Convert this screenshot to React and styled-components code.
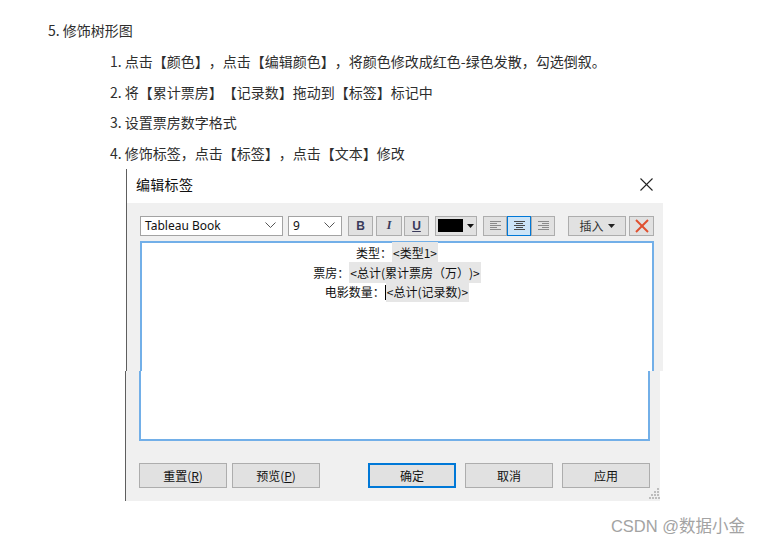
import React from 'react';
import styled, { createGlobalStyle } from 'styled-components';

const Global = createGlobalStyle`
  html, body { margin: 0; padding: 0; background: #fff; }
  body { font-family: "Noto Sans CJK SC", "Noto Sans", sans-serif; }
`;

const Page = styled.div`
  width: 761px;
  height: 544px;
  overflow: hidden;
  box-sizing: border-box;
  padding-top: 15px;
  color: #2e2e2e;
  text-spacing-trim: space-all;
`;

const Heading = styled.div`
  font-size: 14px;
  line-height: 31px;
  padding-left: 48px;
`;

const Steps = styled.ol`
  margin: 0;
  padding: 0 0 0 110px;
  list-style: none;
`;

const Step = styled.li`
  font-size: 14px;
  line-height: 30.7px;
`;

/* ---------- dialog screenshot ---------- */
const ShotTop = styled.div`
  margin-left: 126px;
  width: 537px;
  box-sizing: border-box;
  border-left: 1px solid #5e5e5e;
  font-size: 12px;
  color: #000;
`;

const TitleBar = styled.div`
  height: 34px;
  box-sizing: border-box;
  background: #fff;
  display: flex;
  align-items: center;
  justify-content: space-between;
  padding: 0 10px 3px 9px;
`;

const Title = styled.span`
  font-size: 14px;
  color: #111;
  letter-spacing: 0.3px;
`;

const Body = styled.div`
  background: #f0f0f0;
  padding: 13px 9px 0 13px;
`;

const Toolbar = styled.div`
  display: flex;
  align-items: center;
  height: 20px;
`;

const Select = styled.div`
  width: ${p => p.$w}px;
  height: 20px;
  box-sizing: border-box;
  background: #fff;
  border: 1px solid #a3a3a3;
  display: flex;
  align-items: center;
  justify-content: space-between;
  padding: 0 6px 0 4px;
  margin-right: ${p => p.$mr || 0}px;
  font-family: "Noto Sans", "Noto Sans CJK SC", sans-serif;
  font-size: 12px;
  color: #111;
`;

const ToolBtn = styled.div`
  width: ${p => p.$w || 25}px;
  height: 20px;
  box-sizing: border-box;
  background: ${p => (p.$active ? '#cce4f7' : '#e1e1e1')};
  border: 1px solid ${p => (p.$active ? '#0078d7' : '#adadad')};
  display: flex;
  align-items: center;
  justify-content: center;
  gap: 4px;
  margin-right: ${p => p.$mr || 0}px;
  font-size: 12px;
  color: #333;
`;

const Glyph = styled.span`
  font-family: ${p => (p.$serif ? '"Liberation Serif", serif' : '"Liberation Sans", sans-serif')};
  font-weight: ${p => (p.$bold ? 700 : 400)};
  font-style: ${p => (p.$italic ? 'italic' : 'normal')};
  text-decoration: ${p => (p.$under ? 'underline' : 'none')};
  font-size: 12px;
  color: #3a3a5a;
`;

const Swatch = styled.div`
  width: 25px;
  height: 13px;
  background: #000;
`;

const Group = styled.div`
  display: flex;
  margin-right: ${p => p.$mr || 0}px;
`;

const TextAreaTop = styled.div`
  margin-top: 5px;
  height: 130px;
  box-sizing: border-box;
  background: #fff;
  border: 2px solid #72afe8;
  border-bottom: none;
  text-align: center;
  padding-top: 0px;
  font-size: 12px;
  line-height: 19.7px;
  color: #111;
`;

const Line = styled.div`
  white-space: nowrap;
`;

const Token = styled.span`
  background: #e6e6e6;
  padding: 2px 1px;
`;

const Caret = styled.span`
  display: inline-block;
  width: 1px;
  height: 15px;
  background: #000;
  vertical-align: -3px;
`;

const ShotBottom = styled.div`
  position: relative;
  margin-left: 125px;
  width: 535px;
  height: 130px;
  box-sizing: border-box;
  border-left: 1px solid #5e5e5e;
  background: #f0f0f0;
  padding: 0 10px 0 13px;
  font-size: 12px;
`;

const TextAreaBottom = styled.div`
  height: 70px;
  box-sizing: border-box;
  background: #fff;
  border: 2px solid #72afe8;
  border-top: none;
`;

const ButtonRow = styled.div`
  display: flex;
  margin-top: 22px;
`;

const DlgBtn = styled.div`
  width: 88px;
  height: 25px;
  box-sizing: border-box;
  background: #e1e1e1;
  border: ${p => (p.$primary ? '2px solid #0078d7' : '1px solid #adadad')};
  display: flex;
  align-items: center;
  justify-content: center;
  margin-left: ${p => p.$ml || 0}px;
  font-size: 12px;
  color: #111;
`;

const U = styled.span`
  text-decoration: underline;
`;

const Grip = styled.svg`
  position: absolute;
  right: 0;
  bottom: 2px;
`;

const Watermark = styled.div`
  display: flex;
  justify-content: flex-end;
  padding-right: 16px;
  margin-top: 15px;
  font-family: "Liberation Sans", "Noto Sans CJK SC", sans-serif;
  font-size: 16.5px;
  line-height: 20px;
  color: #a3a3a3;
`;

const Chevron = () => (
  <svg width="11" height="7" viewBox="0 0 11 7">
    <polyline points="0.5,0.5 5.5,5.5 10.5,0.5" fill="none" stroke="#555" strokeWidth="1" />
  </svg>
);

const Caret3 = ({ color = '#111' }) => (
  <svg width="7" height="4" viewBox="0 0 7 4">
    <polygon points="0,0 7,0 3.5,4" fill={color} />
  </svg>
);

const AlignIcon = ({ mode, color }) => {
  const rows = [0, 2, 4, 6, 8];
  const lens = [11, 7, 11, 7, 11];
  return (
    <svg width="11" height="9" viewBox="0 0 11 9">
      {rows.map((y, i) => {
        const l = lens[i];
        const x = mode === 'left' ? 0 : mode === 'right' ? 11 - l : (11 - l) / 2;
        return <rect key={i} x={x} y={y} width={l} height="1" fill={color} />;
      })}
    </svg>
  );
};

export default function App() {
  return (
    <Page>
      <Global />
      <Heading>5. 修饰树形图</Heading>
      <Steps>
        <Step>1. 点击【颜色】，点击【编辑颜色】，将颜色修改成红色-绿色发散，勾选倒叙。</Step>
        <Step>2. 将【累计票房】【记录数】拖动到【标签】标记中</Step>
        <Step>3. 设置票房数字格式</Step>
        <Step>4. 修饰标签，点击【标签】，点击【文本】修改</Step>
      </Steps>

      <ShotTop>
        <TitleBar>
          <Title>编辑标签</Title>
          <svg width="13" height="13" viewBox="0 0 13 13">
            <line x1="0.5" y1="0.5" x2="12.5" y2="12.5" stroke="#222" strokeWidth="1.1" />
            <line x1="12.5" y1="0.5" x2="0.5" y2="12.5" stroke="#222" strokeWidth="1.1" />
          </svg>
        </TitleBar>
        <Body>
          <Toolbar>
            <Select $w={143} $mr={5}>
              <span>Tableau Book</span>
              <Chevron />
            </Select>
            <Select $w={54} $mr={6}>
              <span>9</span>
              <Chevron />
            </Select>
            <ToolBtn $mr={3}><Glyph $bold>B</Glyph></ToolBtn>
            <ToolBtn $w={26} $mr={2}><Glyph $serif $italic $bold>I</Glyph></ToolBtn>
            <ToolBtn $mr={6}><Glyph $bold $under>U</Glyph></ToolBtn>
            <ToolBtn $w={42} $mr={6}>
              <Swatch />
              <Caret3 />
            </ToolBtn>
            <Group $mr={13}>
              <ToolBtn $w={24}><AlignIcon mode="left" color="#8a8a8a" /></ToolBtn>
              <ToolBtn $w={24} $active><AlignIcon mode="center" color="#4a4a4a" /></ToolBtn>
              <ToolBtn $w={24}><AlignIcon mode="right" color="#8a8a8a" /></ToolBtn>
            </Group>
            <ToolBtn $w={58} $mr={3}>
              <span>插入</span>
              <Caret3 color="#222" />
            </ToolBtn>
            <ToolBtn $w={25}>
              <svg width="14" height="14" viewBox="0 0 14 14">
                <line x1="1" y1="1" x2="13" y2="13" stroke="#e0502f" strokeWidth="2" />
                <line x1="13" y1="1" x2="1" y2="13" stroke="#e0502f" strokeWidth="2" />
              </svg>
            </ToolBtn>
          </Toolbar>
          <TextAreaTop>
            <Line>类型：<Token>&lt;类型1&gt;</Token></Line>
            <Line>票房：<Token>&lt;总计(累计票房（万）)&gt;</Token></Line>
            <Line>电影数量：<Caret /><Token>&lt;总计(记录数)&gt;</Token></Line>
          </TextAreaTop>
        </Body>
      </ShotTop>

      <ShotBottom>
        <TextAreaBottom />
        <ButtonRow>
          <DlgBtn>重置(<U>R</U>)</DlgBtn>
          <DlgBtn $ml={5}>预览(<U>P</U>)</DlgBtn>
          <DlgBtn $ml={48} $primary>确定</DlgBtn>
          <DlgBtn $ml={9}>取消</DlgBtn>
          <DlgBtn $ml={9}>应用</DlgBtn>
        </ButtonRow>
        <Grip width="11" height="11" viewBox="0 0 11 11">
          <rect x="8" y="0" width="2" height="2" fill="#bdbdbd" />
          <rect x="5" y="3" width="2" height="2" fill="#bdbdbd" />
          <rect x="8" y="3" width="2" height="2" fill="#bdbdbd" />
          <rect x="2" y="6" width="2" height="2" fill="#bdbdbd" />
          <rect x="5" y="6" width="2" height="2" fill="#bdbdbd" />
          <rect x="8" y="6" width="2" height="2" fill="#bdbdbd" />
          <rect x="0" y="9" width="2" height="2" fill="#bdbdbd" />
          <rect x="3" y="9" width="2" height="2" fill="#bdbdbd" />
          <rect x="6" y="9" width="2" height="2" fill="#bdbdbd" />
          <rect x="9" y="9" width="2" height="2" fill="#bdbdbd" />
        </Grip>
      </ShotBottom>

      <Watermark>CSDN @数据小金</Watermark>
    </Page>
  );
}
